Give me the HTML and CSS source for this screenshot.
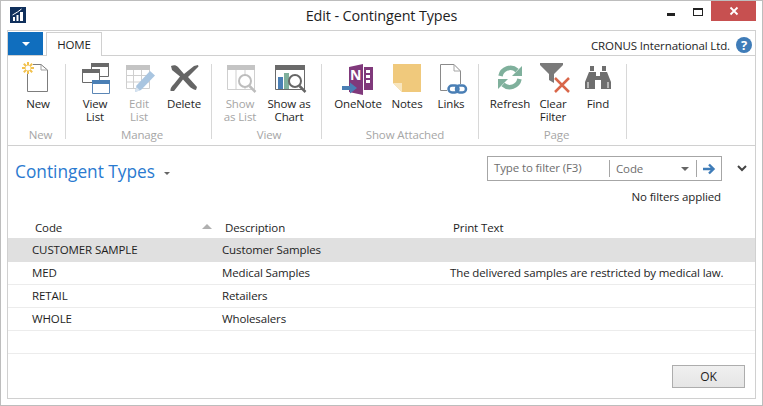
FILE: index.html
```html
<!DOCTYPE html>
<html>
<head>
  <meta charset="UTF-8">
  <title>Edit - Contingent Types</title>
  <link rel="stylesheet" href="styles.css">
</head>
<body>
  <div class="window">
    <div class="titlebar">
      <svg class="app-icon" width="16" height="16" viewBox="0 0 16 16">
        <rect width="16" height="16" fill="#10305c"/>
        <path d="M3 10h2v4H3zM6.500 8h2v6h-2zM10 5h3v9h-3z" fill="#fff"/>
        <path d="M2.500 8l5-3 4-3" fill="none" stroke="#fff"/>
      </svg>
      <div class="title">Edit - Contingent Types</div>
      <div class="win-controls">
        <span class="win-min"></span>
        <span class="win-max"></span>
        <span class="win-close">
          <svg width="10" height="10" viewBox="0 0 10 10"><path d="M1.500 1.500l7 7M8.500 1.500l-7 7" stroke="#fff" stroke-width="1.800"/></svg>
        </span>
      </div>
    </div>

    <div class="frame">
      <div class="tabs">
        <div class="app-btn"><span class="tri-white"></span></div>
        <div class="tab">HOME</div>
        <div class="company">CRONUS International Ltd.</div>
        <div class="help">?</div>
      </div>

      <div class="ribbon">
        <div class="group g-new">
          <div class="btns">
            <div class="btn w44">
              <svg class="icon" viewBox="0 0 34 34">
                <path d="M6.500 10V31.500H26.500V10L20 4.500H12" fill="#fff" stroke="#7d7d7d"/>
                <path d="M20 4.500V10H26.500" fill="none" stroke="#a0a0a0"/>
                <path d="M7 2v12M1 8h12M2.800 3.800l8.400 8.400M11.200 3.800l-8.400 8.400" stroke="#f2c14e" stroke-width="2"/>
                <circle cx="7" cy="8" r="2.500" fill="#fff"/>
              </svg>
              <span>New</span>
            </div>
          </div>
          <div class="group-name">New</div>
        </div>

        <div class="group g-manage">
          <div class="btns">
            <div class="btn w44">
              <svg class="icon" viewBox="0 0 34 34">
                <path d="M13.500 3.500h17v13h-17z" fill="#fff" stroke="#6a6a6a"/>
                <rect x="13" y="3" width="18" height="4" fill="#6a6a6a"/>
                <path d="M4.500 9.500h17v13h-17z" fill="#fff" stroke="#6a6a6a"/>
                <rect x="4" y="9" width="18" height="4" fill="#6a6a6a"/>
                <path d="M14.500 20.500h17v13h-17z" fill="#fff" stroke="#5b86b5"/>
                <rect x="14" y="20" width="18" height="4" fill="#4a7fb5"/>
              </svg>
              <span>View<br>List</span>
            </div>
            <div class="btn w44 off">
              <svg class="icon" viewBox="0 0 34 34">
                <path d="M4.500 5.500h23v23h-23zM4.500 15.500h23M4.500 22h23M11.500 9v19.500M19.500 9v19.500" fill="#fff" stroke="#cfcfcf"/>
                <rect x="4" y="5" width="24" height="5" fill="#c4c4c4"/>
                <path d="M13 32l1.500-6.500L28 11l5 4.500L19 30z" fill="#a9c5e0"/>
                <path d="M13 32l1.500-5 3.500 3.500z" fill="#d8e4f0"/>
              </svg>
              <span>Edit<br>List</span>
            </div>
            <div class="btn w46">
              <svg class="icon" viewBox="0 0 34 34">
                <path d="M4 6C7 4.500 9 5 11 7L17 14 27 6 31 5 31.500 6.500 21 17 30 27 29 30C26 29.500 24 28 22 26L16 19.500 7 31 3.500 31C3 28 5 26 7 24L13 16.500 5 10z" fill="#656565"/>
              </svg>
              <span>Delete</span>
            </div>
          </div>
          <div class="group-name">Manage</div>
        </div>

        <div class="group g-view">
          <div class="btns">
            <div class="btn w46 off">
              <svg class="icon" viewBox="0 0 34 34">
                <path d="M4.500 5.500h27v24h-27zM13 9v20M22 9v20" fill="#fff" stroke="#cfcfcf"/>
                <rect x="4" y="5" width="28" height="5" fill="#c4c4c4"/>
                <circle cx="22" cy="21" r="6" fill="#fff" stroke="#bdbdbd" stroke-width="2"/>
                <path d="M26.500 26l6 6" stroke="#bdbdbd" stroke-width="2.500"/>
              </svg>
              <span>Show<br>as List</span>
            </div>
            <div class="btn w52">
              <svg class="icon" viewBox="0 0 34 34">
                <path d="M3.500 5.500h29v24h-29z" fill="#fff" stroke="#6a6a6a"/>
                <rect x="3" y="5" width="30" height="5" fill="#6a6a6a"/>
                <rect x="6" y="17" width="5" height="12" fill="#4a7fb5"/>
                <rect x="12" y="13" width="5" height="16" fill="#7fb09c"/>
                <circle cx="23" cy="21" r="6" fill="#fff" stroke="#666" stroke-width="2"/>
                <path d="M27.500 26l6 6" stroke="#666" stroke-width="2.500"/>
              </svg>
              <span>Show as<br>Chart</span>
            </div>
          </div>
          <div class="group-name">View</div>
        </div>

        <div class="group g-attached">
          <div class="btns">
            <div class="btn w52">
              <svg class="icon" viewBox="0 0 34 34">
                <path d="M8 7L22 4V35L8 32V27H13V12H8z" fill="#80397b"/>
                <path d="M23 7H32V30H23z" fill="#80397b"/>
                <path d="M25 10h4v3h-4zM25 15h4v3h-4zM25 20h4v3h-4z" fill="#fff"/>
                <rect x="8" y="8" width="13" height="18" fill="#80397b"/>
                <text x="9" y="20" class="onenote-n">N</text>
                <path d="M1 26h8v-3.500L16 28l-7 5.500V30H1z" fill="#4a7fb5"/>
              </svg>
              <span>OneNote</span>
            </div>
            <div class="btn w46">
              <svg class="icon" viewBox="0 0 34 34">
                <path d="M3 4h28v28H12L3 23z" fill="#f0c97c"/>
                <path d="M3 23h9v9z" fill="#f8e6bf"/>
              </svg>
              <span>Notes</span>
            </div>
            <div class="btn w42">
              <svg class="icon" viewBox="0 0 34 34">
                <path d="M13 30.500H6.500V4.500H20L26.500 11V24" fill="#fff" stroke="#8a8a8a"/>
                <path d="M20 4.500V11H26.500" fill="none" stroke="#a6a6a6"/>
                <rect x="14.500" y="25.500" width="10" height="7" rx="3.500" fill="none" stroke="#4a7fb5" stroke-width="2.500"/>
                <rect x="22" y="25.500" width="10" height="7" rx="3.500" fill="none" stroke="#4a7fb5" stroke-width="2.500"/>
              </svg>
              <span>Links</span>
            </div>
          </div>
          <div class="group-name">Show Attached</div>
        </div>

        <div class="group g-page">
          <div class="btns">
            <div class="btn w46">
              <svg class="icon" viewBox="0 0 34 34">
                <path d="M7.500 16A10 10 0 0 1 24 10.500" fill="none" stroke="#7fb09c" stroke-width="4.500"/>
                <path d="M29 6V16H19z" fill="#7fb09c"/>
                <path d="M26.500 19A10 10 0 0 1 10 24.500" fill="none" stroke="#7fb09c" stroke-width="4.500"/>
                <path d="M5 29V19H15z" fill="#7fb09c"/>
              </svg>
              <span>Refresh</span>
            </div>
            <div class="btn w40">
              <svg class="icon" viewBox="0 0 34 34">
                <path d="M4 3H27V5L18 14V23L13 20V14L4 5z" fill="#7a7a7a"/>
                <path d="M19 18L33 32M33 18L19 32" stroke="#d9674a" stroke-width="2.500"/>
              </svg>
              <span>Clear<br>Filter</span>
            </div>
            <div class="btn w50">
              <svg class="icon" viewBox="0 0 34 34">
                <path d="M9 6h4v5h-4zM21 6h4v5h-4z" fill="#6e6e6e"/>
                <path d="M8 12h7v4h4v-4h7l4 10v7H20V20h-6v9H4v-7z" fill="#6e6e6e"/>
                <path d="M7 22v6M27 22v6" stroke="#fff"/>
              </svg>
              <span>Find</span>
            </div>
          </div>
          <div class="group-name">Page</div>
        </div>
      </div>

      <div class="content">
        <div class="page-head">
          <div class="page-title">Contingent Types <span class="tri-gray"></span></div>
          <div class="filter-side">
            <div class="filter-row">
              <div class="filter">
                <div class="filter-input">Type to filter (F3)</div>
                <div class="filter-field">Code <span class="tri-gray wide"></span></div>
                <div class="filter-go">
                  <svg width="14" height="12" viewBox="0 0 14 12"><path d="M1 6h10M7 1.500L11.500 6 7 10.500" fill="none" stroke="#3f7cb8" stroke-width="2.400"/></svg>
                </div>
              </div>
              <svg class="chevron" width="10" height="7" viewBox="0 0 10 7"><path d="M1 1l4 4 4-4" fill="none" stroke="#444" stroke-width="2"/></svg>
            </div>
            <div class="no-filters">No filters applied</div>
          </div>
        </div>

        <table class="grid">
          <thead>
            <tr>
              <th class="c1">Code <span class="tri-sort"></span></th>
              <th class="c2">Description</th>
              <th>Print Text</th>
            </tr>
          </thead>
          <tbody>
            <tr class="selected"><td>CUSTOMER SAMPLE</td><td>Customer Samples</td><td></td></tr>
            <tr><td>MED</td><td>Medical Samples</td><td>The delivered samples are restricted by medical law.</td></tr>
            <tr><td>RETAIL</td><td>Retailers</td><td></td></tr>
            <tr><td>WHOLE</td><td>Wholesalers</td><td></td></tr>
            <tr><td></td><td></td><td></td></tr>
          </tbody>
        </table>

        <div class="footer">
          <button class="ok">OK</button>
        </div>
      </div>
    </div>
  </div>
</body>
</html>
```

FILE: styles.css
```css
* {
  box-sizing: border-box;
}
body {
  margin: 0;
  font-family: "Open Sans", "Noto Sans", sans-serif;
  font-size: 11.5px;
  letter-spacing: -0.12px;
  color: #1e1e1e;
}
.window {
  width: 763px;
  height: 406px;
  background: #fff;
  border: 1px solid #bdbdbd;
  padding: 0 6px 6px 6px;
  display: flex;
  flex-direction: column;
  overflow: hidden;
}

/* title bar */
.titlebar {
  height: 29px;
  flex: none;
  display: flex;
  align-items: flex-start;
  position: relative;
}
.app-icon {
  margin: 6px 0 0 3px;
}
.title {
  position: absolute;
  left: 0;
  right: 0;
  top: 5px;
  text-align: center;
  font-size: 14.400px;
  line-height: 20px;
}
.win-controls {
  margin-left: auto;
  display: flex;
  align-items: flex-start;
  position: relative;
}
.win-min {
  width: 8px;
  height: 3px;
  background: #222;
  margin: 12px 18px 0 0;
}
.win-max {
  width: 10px;
  height: 8px;
  border: 1px solid #222;
  border-top-width: 2px;
  margin: 7px 8px 0 0;
}
.win-close {
  width: 45px;
  height: 20px;
  background: #c75050;
  display: flex;
  align-items: center;
  justify-content: center;
}

/* frame */
.frame {
  flex: 1;
  border: 1px solid #d0d0d0;
  display: flex;
  flex-direction: column;
  min-height: 0;
}
.tabs {
  height: 24px;
  flex: none;
  display: flex;
  align-items: flex-start;
  padding-top: 1px;
  position: relative;
}
.app-btn {
  width: 35px;
  height: 23px;
  background: #106ebe;
  display: flex;
  align-items: center;
  justify-content: center;
}
.tri-white {
  border-left: 4px solid transparent;
  border-right: 4px solid transparent;
  border-top: 4px solid #fff;
}
.tab {
  width: 56px;
  margin-left: 3px;
  height: 24px;
  border: 1px solid #d0d0d0;
  border-bottom: none;
  background: #fff;
  text-align: center;
  line-height: 24px;
  position: relative;
  z-index: 1;
}
.company {
  margin-left: auto;
  line-height: 27px;
}
.help {
  width: 16px;
  height: 16px;
  border-radius: 50%;
  background: #3f7cb8;
  color: #fff;
  font-weight: bold;
  font-size: 13px;
  line-height: 16px;
  text-align: center;
  margin: 5px 3px 0 6px;
}

/* ribbon */
.ribbon {
  height: 91px;
  flex: none;
  display: flex;
  border-top: 1px solid #d0d0d0;
  border-bottom: 1px solid #d0d0d0;
  padding-top: 8px;
}
.group {
  border-right: 1px solid #d8d8d8;
  height: 75px;
  display: flex;
  flex-direction: column;
}
.g-new { width: 58px; padding-left: 8px; }
.g-manage { width: 146px; padding-left: 7px; }
.g-view { width: 110px; padding-left: 5px; }
.g-attached { width: 157px; padding-left: 10px; }
.g-page { width: 148px; padding-left: 8px; }
.btns {
  display: flex;
  flex: 1;
}
.btn {
  text-align: center;
  line-height: 13px;
  display: flex;
  flex-direction: column;
  align-items: center;
  margin-top: -4px;
}
.btn .icon {
  width: 34px;
  height: 34px;
  margin-bottom: 3px;
  flex: none;
  overflow: visible;
}
.w40 { width: 40px; }
.w42 { width: 42px; }
.w44 { width: 44px; }
.w46 { width: 46px; }
.w50 { width: 50px; }
.w52 { width: 52px; }
.off {
  color: #a6a6a6;
}
.group-name {
  text-align: center;
  color: #a6a6a6;
  line-height: 16px;
  margin-bottom: -4px;
}
.onenote-n {
  font-family: "Open Sans", sans-serif;
  font-size: 14px;
  font-weight: bold;
  fill: #fff;
}

/* list page */
.content {
  flex: 1;
  display: flex;
  flex-direction: column;
  min-height: 0;
}
.page-head {
  height: 70px;
  flex: none;
  display: flex;
  justify-content: space-between;
  padding: 10px 0 0 7px;
}
.page-title {
  font-size: 17.300px;
  line-height: 32px;
  letter-spacing: 0;
  color: #2a7ad0;
}
.tri-gray {
  display: inline-block;
  border-left: 3px solid transparent;
  border-right: 3px solid transparent;
  border-top: 3px solid #666;
  vertical-align: middle;
  margin-left: 4px;
}
.tri-gray.wide {
  border-left-width: 4px;
  border-right-width: 4px;
  border-top-width: 4px;
}
.filter-side {
  width: 268px;
}
.filter-row {
  display: flex;
  align-items: center;
}
.filter {
  width: 235px;
  height: 25px;
  border: 1px solid #a6a6a6;
  display: flex;
  align-items: center;
  color: #6e6e6e;
}
.filter-input {
  width: 122px;
  padding-left: 6px;
  border-right: 1px solid #a6a6a6;
  height: 17px;
  line-height: 15px;
}
.filter-field {
  width: 87px;
  padding-left: 6px;
  display: flex;
  align-items: center;
  justify-content: space-between;
  border-right: 1px solid #a6a6a6;
  height: 17px;
  padding-right: 7px;
}
.filter-go {
  flex: 1;
  display: flex;
  justify-content: center;
}
.chevron {
  margin-left: 15px;
}
.no-filters {
  margin-top: 7px;
  width: 234px;
  text-align: right;
  line-height: 18px;
}

/* table */
.grid {
  width: 100%;
  border-collapse: collapse;
  table-layout: fixed;
}
.grid th {
  height: 22px;
  font-weight: normal;
  text-align: left;
  padding: 2px 0 0 7px;
  border-bottom: 1px solid #e0e0e0;
}
.grid th.c1 {
  width: 210px;
  padding-left: 27px;
  position: relative;
}
.grid th.c2 {
  width: 228px;
}
.tri-sort {
  position: absolute;
  left: 194px;
  top: 8px;
  border-left: 5px solid transparent;
  border-right: 5px solid transparent;
  border-bottom: 5px solid #b0b0b0;
}
.grid td {
  height: 23px;
  padding: 0 0 0 4px;
  border-bottom: 1px solid #ececec;
}
.grid td:first-child {
  padding-left: 24px;
}
.grid .selected td {
  background: #e0e0e0;
  border-bottom-color: #e0e0e0;
}
.footer {
  flex: 1;
  display: flex;
  justify-content: flex-end;
  align-items: flex-start;
  padding: 11px 10px 0 0;
}
.ok {
  width: 73px;
  height: 23px;
  border: 1px solid #adadad;
  background: linear-gradient(#f0f0f0, #e5e5e5);
  font-family: inherit;
  font-size: 12px;
  color: #1e1e1e;
  padding: 0;
}
```
